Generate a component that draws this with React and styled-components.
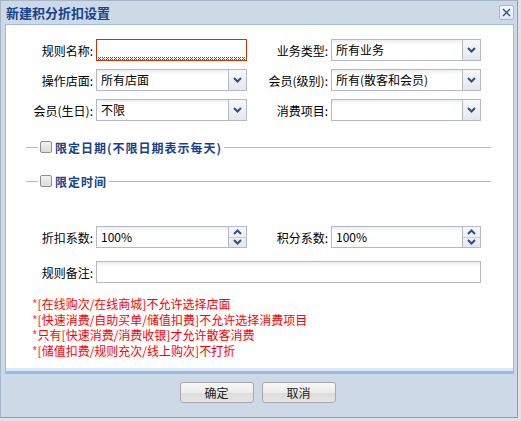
import React from "react";
import styled, { createGlobalStyle } from "styled-components";

const GlobalStyle = createGlobalStyle`
  body {
    margin: 0;
    background: #dfe3e8;
    font-family: "Noto Sans CJK SC", "DejaVu Sans", sans-serif;
    font-size: 12px;
  }
`;

const Dialog = styled.div`
  width: 518px;
  height: 418px;
  box-sizing: border-box;
  border: 1px solid #a5b5ca;
  border-right-color: #8c9db3;
  border-bottom-color: #8c9db3;
  background: #ced9e7;
  display: flex;
  flex-direction: column;
`;

const TitleBar = styled.div`
  height: 23px;
  display: flex;
  align-items: center;
  justify-content: space-between;
  padding: 0 3px 0 5px;
  font-size: 13px;
  font-weight: bold;
  color: #15428b;
`;

const CloseBtn = styled.span`
  width: 15px;
  height: 15px;
  box-sizing: border-box;
  border: 1px solid #99bbe8;
  border-radius: 2px;
  background: linear-gradient(#f4f8fd, #dce7f5);
  display: flex;
  align-items: center;
  justify-content: center;
`;

const Panel = styled.div`
  margin: 0 3px 0 4px;
  height: 350px;
  box-sizing: border-box;
  background: #fff;
  border: 1px solid #99bbe8;
  border-bottom: 3px solid #99bbe8;
  box-shadow: inset 0 -3px 0 #dfe8f6;
  padding-top: 14px;
`;

const FormGrid = styled.div`
  display: grid;
  grid-template-columns: 87px 151px 78px 150px;
  column-gap: 3px;
  row-gap: ${(p) => p.$rowGap}px;
  align-items: center;
  margin-top: ${(p) => p.$top || 0}px;
`;

const Label = styled.label`
  text-align: right;
  color: #000;
  font-size: 12px;
  white-space: nowrap;
`;

const FieldBox = styled.div`
  height: 22px;
  box-sizing: border-box;
  border: 1px solid ${(p) => (p.$invalid ? "#cc3300" : "#b5b8c8")};
  background: linear-gradient(#eceef1 0, #fff 5px);
  display: flex;
  grid-column: ${(p) => p.$span || "auto"};
  ${(p) =>
    p.$invalid &&
    `
    background:
      linear-gradient(135deg, transparent 45%, #dd2200 45%, #dd2200 60%, transparent 60%) 0 100% / 4px 3px repeat-x,
      linear-gradient(45deg, transparent 45%, #dd2200 45%, #dd2200 60%, transparent 60%) 0 100% / 4px 3px repeat-x,
      #fff;
  `}
`;

const FieldText = styled.span`
  flex: 1;
  padding-left: 4px;
  line-height: 20px;
  font-size: 12px;
  color: #000;
  white-space: nowrap;
  overflow: hidden;
`;

const TriggerBtn = styled.span`
  width: 17px;
  border-left: 1px solid #b5b8c8;
  background: linear-gradient(#f6f7f9, #e4e8ee);
  display: flex;
  flex-direction: column;
  align-items: center;
  justify-content: center;
`;

const SpinHalf = styled.span`
  flex: 1;
  width: 100%;
  display: flex;
  align-items: center;
  justify-content: center;
  border-top: ${(p) => (p.$lower ? "1px solid #c8ccd6" : "none")};
`;

const Legend = styled.div`
  display: flex;
  align-items: center;
  height: 16px;
  margin: ${(p) => p.$top}px 22px 0 20px;
  color: #15428b;
  font-weight: bold;
  font-size: 12px;
`;

const Line = styled.span`
  height: 1px;
  background: #b5b8c8;
  flex: ${(p) => (p.$grow ? 1 : "none")};
  width: ${(p) => (p.$grow ? "auto" : "12px")};
`;

const Check = styled.span`
  width: 12px;
  height: 12px;
  box-sizing: border-box;
  border: 1px solid #8e8f8f;
  border-radius: 2px;
  background: linear-gradient(#f2f2f2, #dcdcdc);
  margin: 0 3px 0 2px;
`;

const LegendText = styled.span`
  padding-right: 2px;
  letter-spacing: 1px;
  white-space: nowrap;
`;

const Notes = styled.div`
  margin: 13px 0 0 26px;
  color: #ff0000;
  font-size: 12px;
  line-height: 15.5px;
`;

const Star = styled.span`
  color: #ff3377;
`;

const Footer = styled.div`
  flex: 1;
  display: flex;
  justify-content: center;
  gap: 8px;
  padding: 8px 3px 0 0;
`;

const Button = styled.button`
  width: 74px;
  height: 21px;
  box-sizing: border-box;
  border: 1px solid #a8a8a8;
  border-radius: 3px;
  background: linear-gradient(#f7f7f7 0, #ececec 50%, #dcdcdc 51%, #e4e4e4 100%);
  font-family: "Noto Sans CJK SC", sans-serif;
  font-size: 12px;
  color: #222;
  padding: 0;
`;

const Chevron = ({ up }) => (
  <svg width="9" height="6" viewBox="0 0 9 6">
    <polyline
      points={up ? "1,5 4.5,1.5 8,5" : "1,1 4.5,4.5 8,1"}
      fill="none"
      stroke="#2d4f86"
      strokeWidth="2"
    />
  </svg>
);

const Select = ({ value }) => (
  <FieldBox>
    <FieldText>{value}</FieldText>
    <TriggerBtn>
      <Chevron />
    </TriggerBtn>
  </FieldBox>
);

const Spinner = ({ value }) => (
  <FieldBox>
    <FieldText>{value}</FieldText>
    <TriggerBtn>
      <SpinHalf>
        <Chevron up />
      </SpinHalf>
      <SpinHalf $lower>
        <Chevron />
      </SpinHalf>
    </TriggerBtn>
  </FieldBox>
);

const notes = [
  "[在线购次/在线商城]不允许选择店面",
  "[快速消费/自助买单/储值扣费]不允许选择消费项目",
  "只有[快速消费/消费收银]才允许散客消费",
  "[储值扣费/规则充次/线上购次]不打折",
];

export default function App() {
  return (
    <>
      <GlobalStyle />
      <Dialog>
        <TitleBar>
          <span>新建积分折扣设置</span>
          <CloseBtn>
            <svg width="9" height="9" viewBox="0 0 9 9">
              <path d="M1 1L8 8M8 1L1 8" stroke="#2d4f86" strokeWidth="1.4" />
            </svg>
          </CloseBtn>
        </TitleBar>
        <Panel>
          <FormGrid $rowGap={8}>
            <Label>规则名称:</Label>
            <FieldBox $invalid />
            <Label>业务类型:</Label>
            <Select value="所有业务" />

            <Label>操作店面:</Label>
            <Select value="所有店面" />
            <Label>会员(级别):</Label>
            <Select value="所有(散客和会员)" />

            <Label>会员(生日):</Label>
            <Select value="不限" />
            <Label>消费项目:</Label>
            <Select value="" />
          </FormGrid>

          <Legend $top={18}>
            <Line />
            <Check />
            <LegendText>限定日期(不限日期表示每天)</LegendText>
            <Line $grow />
          </Legend>
          <Legend $top={18}>
            <Line />
            <Check />
            <LegendText>限定时间</LegendText>
            <Line $grow />
          </Legend>

          <FormGrid $rowGap={13} $top={37}>
            <Label>折扣系数:</Label>
            <Spinner value="100%" />
            <Label>积分系数:</Label>
            <Spinner value="100%" />

            <Label>规则备注:</Label>
            <FieldBox $span="2 / 5" />
          </FormGrid>

          <Notes>
            {notes.map((n) => (
              <div key={n}>
                <Star>*</Star>
                {n}
              </div>
            ))}
          </Notes>
        </Panel>
        <Footer>
          <Button>确定</Button>
          <Button>取消</Button>
        </Footer>
      </Dialog>
    </>
  );
}
